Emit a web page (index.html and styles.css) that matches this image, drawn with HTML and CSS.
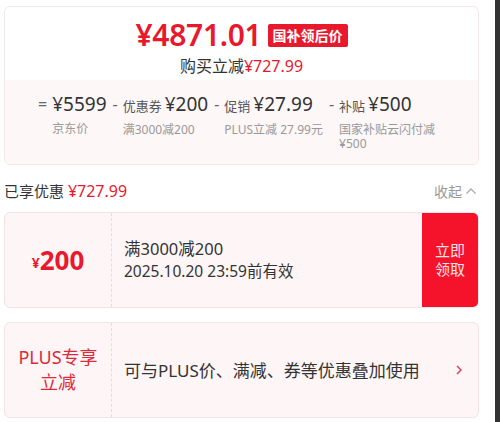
FILE: index.html
```html
<!DOCTYPE html>
<html lang="zh-CN">
<head>
    <meta charset="UTF-8">
    <meta name="viewport" content="width=device-width, initial-scale=1.0">
    <title>国补领后价</title>
    <link rel="stylesheet" href="styles.css">
</head>
<body>
    <div class="page">
        <div class="price-card">
            <div class="price-top">
                <div class="final-line">
                    <span class="final-price">¥4871.01</span>
                    <span class="final-tag">国补领后价</span>
                </div>
                <div class="save-line">购买立减<span class="red">¥727.99</span></div>
            </div>
            <div class="price-calc">
                <div class="calc-item">
                    <span class="sign">=</span>
                    <div class="calc-body">
                        <div class="calc-main"><span class="calc-value">¥5599</span></div>
                        <div class="calc-sub">京东价</div>
                    </div>
                </div>
                <div class="calc-item">
                    <span class="sign">-</span>
                    <div class="calc-body">
                        <div class="calc-main"><span class="calc-label">优惠券</span><span class="calc-value">¥200</span></div>
                        <div class="calc-sub">满3000减200</div>
                    </div>
                </div>
                <div class="calc-item">
                    <span class="sign">-</span>
                    <div class="calc-body">
                        <div class="calc-main"><span class="calc-label">促销</span><span class="calc-value">¥27.99</span></div>
                        <div class="calc-sub">PLUS立减 27.99元</div>
                    </div>
                </div>
                <div class="calc-item last">
                    <span class="sign">-</span>
                    <div class="calc-body">
                        <div class="calc-main"><span class="calc-label">补贴</span><span class="calc-value">¥500</span></div>
                        <div class="calc-sub">国家补贴云闪付减¥500</div>
                    </div>
                </div>
            </div>
        </div>

        <div class="enjoy-row">
            <div class="enjoy-title">已享优惠 <span class="red">¥727.99</span></div>
            <div class="collapse">收起
                <svg width="12" height="8" viewBox="0 0 12 8"><path d="M1.5 6.5 L6 2 L10.5 6.5" fill="none" stroke="#aaa" stroke-width="1.3"/></svg>
            </div>
        </div>

        <div class="coupon">
            <div class="coupon-left">
                <span class="coupon-yen">¥</span><span class="coupon-amount">200</span>
            </div>
            <div class="coupon-mid">
                <div class="coupon-title">满3000减200</div>
                <div class="coupon-date">2025.10.20 23:59前有效</div>
            </div>
            <div class="coupon-btn">立即<br>领取</div>
        </div>

        <div class="coupon">
            <div class="coupon-left plus">PLUS专享<br>立减</div>
            <div class="coupon-mid wide">
                <div>可与PLUS价、满减、券等优惠叠加使用</div>
            </div>
            <div class="coupon-arrow">
                <svg width="8" height="12" viewBox="0 0 8 12"><path d="M2 2 L6 6 L2 10" fill="none" stroke="#d9475a" stroke-width="1.5"/></svg>
            </div>
        </div>
    </div>
    <div class="side-edge"></div>
</body>
</html>
```

FILE: styles.css
```css
body {
    margin: 0;
    display: flex;
    height: 422px;
    overflow: hidden;
    background: #fff;
    font-family: "Noto Sans", "Noto Sans CJK SC", sans-serif;
    color: #333;
}
.page {
    width: 475px;
    padding: 6px 0 0 4px;
}
.side-edge {
    margin-left: auto;
    width: 5px;
    background: #333;
}
.red {
    color: #e8192c;
}

/* price card */
.price-card {
    border: 1px solid #f3e7e8;
    border-radius: 6px;
    overflow: hidden;
}
.price-top {
    padding: 11px 0 3px;
    text-align: center;
}
.final-line {
    display: flex;
    justify-content: center;
    align-items: center;
    height: 34px;
}
.final-price {
    font-size: 30px;
    font-weight: 600;
    letter-spacing: -0.3px;
    color: #e8192c;
    line-height: 34px;
}
.final-tag {
    margin-left: 6px;
    background: #e8192c;
    color: #fff;
    font-size: 14px;
    font-weight: 700;
    line-height: 23px;
    padding: 0 5px;
    border-radius: 2px;
}
.save-line {
    margin-top: 3px;
    font-size: 16px;
    line-height: 22px;
}
.price-calc {
    background: #fdf7f7;
    display: flex;
    gap: 6px;
    padding: 12px 34px 13px 33px;
}
.calc-item {
    display: flex;
    align-items: flex-start;
}
.calc-item.last {
    min-width: 0;
    flex: 1;
}
.sign {
    font-size: 16px;
    line-height: 24px;
    color: #666;
    margin-right: 5px;
}
.calc-main {
    line-height: 24px;
    white-space: nowrap;
}
.calc-label {
    font-size: 13px;
    color: #555;
    margin-right: 3px;
}
.calc-value {
    font-size: 19px;
    color: #333;
}
.calc-sub {
    margin-top: 5px;
    font-size: 12px;
    line-height: 14px;
    color: #999;
}

/* enjoy row */
.enjoy-row {
    display: flex;
    justify-content: space-between;
    align-items: center;
    height: 28px;
    margin: 12px 0 7px;
}
.enjoy-title {
    font-size: 15px;
}
.enjoy-title .red {
    font-size: 16px;
}
.collapse {
    display: flex;
    align-items: center;
    gap: 3px;
    font-size: 14px;
    color: #999;
    padding-right: 2px;
}

/* coupons */
.coupon {
    box-sizing: border-box;
    display: flex;
    height: 96px;
    background: #fdf5f6;
    border: 1px solid #f3e5e7;
    border-radius: 6px;
    margin-bottom: 14px;
    overflow: hidden;
}
.coupon-left {
    width: 106px;
    border-right: 1px dashed #eadada;
    display: flex;
    align-items: center;
    justify-content: center;
    color: #e8192c;
    font-weight: 700;
}
.coupon-yen {
    font-size: 14px;
    margin-top: 4px;
}
.coupon-amount {
    font-size: 26px;
}
.coupon-left.plus {
    font-weight: 400;
    font-size: 18px;
    line-height: 25px;
    text-align: center;
    color: #dc2a3c;
}
.coupon-mid {
    flex: 1;
    display: flex;
    flex-direction: column;
    justify-content: center;
    padding-left: 12px;
    font-size: 16px;
    line-height: 23px;
}
.coupon-title {
    font-size: 16.5px;
}
.coupon-date {
    font-size: 15.5px;
}
.coupon-mid.wide {
    font-size: 17px;
}
.coupon-btn {
    width: 56px;
    background: #f5132b;
    color: #fde2e6;
    font-size: 15px;
    line-height: 19px;
    display: flex;
    align-items: center;
    justify-content: center;
    text-align: center;
}
.coupon-arrow {
    display: flex;
    align-items: center;
    padding-right: 15px;
}
```
